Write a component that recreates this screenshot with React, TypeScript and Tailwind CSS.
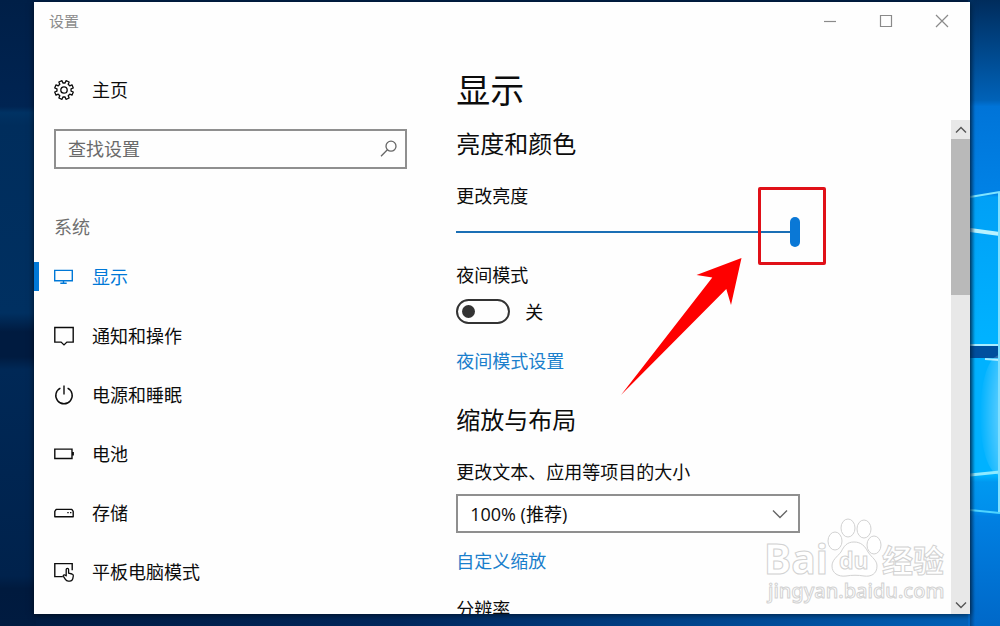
import { ReactNode, useState } from "react";

type IconProps = { className?: string };

function Icon({ children, className = "" }: { children: ReactNode; className?: string }) {
  return (
    <svg
      viewBox="0 0 20 20"
      className={`h-5 w-5 shrink-0 ${className}`}
      fill="none"
      stroke="currentColor"
      strokeWidth="1.4"
      aria-hidden="true"
    >
      {children}
    </svg>
  );
}

function gearPath() {
  const teeth = 8;
  const points: string[] = [];
  for (let i = 0; i < teeth; i++) {
    const base = (i * 2 * Math.PI) / teeth - Math.PI / 2 + Math.PI / 8;
    const corners: [number, number][] = [
      [-0.24, 7.1],
      [-0.18, 9.5],
      [0.18, 9.5],
      [0.24, 7.1],
    ];
    for (const [offset, r] of corners) {
      const x = 10 + r * Math.cos(base + offset);
      const y = 10 + r * Math.sin(base + offset);
      points.push(`${x.toFixed(2)} ${y.toFixed(2)}`);
    }
  }
  return `M${points.join("L")}Z`;
}

const GearIcon = ({ className }: IconProps) => (
  <Icon className={className}>
    <path d={gearPath()} strokeWidth="1.3" strokeLinejoin="round" />
    <circle cx="10" cy="10" r="3.2" strokeWidth="1.3" />
  </Icon>
);

const DisplayIcon = () => (
  <Icon>
    <path d="M.7 3.4h17.6v10.3H.7zM9.5 13.7v2.4M6.3 16.2h6.4" />
  </Icon>
);

const NotificationIcon = () => (
  <Icon>
    <path d="M.8 1.5h18.4v14.6h-6.3L10 18.9l-2.9-2.8H.8z" />
  </Icon>
);

const PowerIcon = () => (
  <Icon>
    <path d="M6.4 3.2a8.2 8.2 0 1 0 7.2 0M10 .6v9" />
  </Icon>
);

const BatteryIcon = () => (
  <Icon>
    <path d="M.8 5.1h17.2v9.4H.8zM19.2 8v3.6" />
  </Icon>
);

const StorageIcon = () => (
  <Icon>
    <path d="M2.2 6.4h15.6l1.4 2v5.4H.8V8.400z" strokeLinejoin="round" />
    <path d="M13.300 9.600h1.400M16 9.600h1.400" />
  </Icon>
);

const TabletIcon = () => (
  <Icon>
    <path d="M8.800 14.600H.8V1.600h17.400v6.600" />
    <path
      d="M12.200 13.800V7.600c0-1.700 2.400-1.700 2.400 0v3.600l3.400.8c1 .3 1.400 1 1.300 2l-.5 2.600c-.4 1.600-1.500 2.500-3 2.500h-1.500c-1.300 0-2.200-.6-2.900-1.700l-2-3.100c-.5-1.200.8-1.900 1.600-1.200z"
      strokeWidth="1.3"
      strokeLinejoin="round"
    />
  </Icon>
);

const items = [
  { label: "显示", icon: <DisplayIcon />, active: true },
  { label: "通知和操作", icon: <NotificationIcon /> },
  { label: "电源和睡眠", icon: <PowerIcon /> },
  { label: "电池", icon: <BatteryIcon /> },
  { label: "存储", icon: <StorageIcon /> },
  { label: "平板电脑模式", icon: <TabletIcon /> },
];

function Wallpaper() {
  return (
    <svg
      className="absolute inset-0 h-full w-full"
      viewBox="0 0 1000 626"
      preserveAspectRatio="none"
      aria-hidden="true"
    >
      <defs>
        <linearGradient id="base" x1="0" x2="1" y1="0" y2="0">
          <stop offset="0" stopColor="#001b40" />
          <stop offset="0.4" stopColor="#00275c" />
          <stop offset="0.75" stopColor="#004a96" />
          <stop offset="1" stopColor="#0064bd" />
        </linearGradient>
        <linearGradient id="left" x1="0" x2="0" y1="0" y2="1">
          <stop offset="0" stopColor="#001f47" />
          <stop offset="0.17" stopColor="#002452" />
          <stop offset="0.18" stopColor="#003263" />
          <stop offset="0.2" stopColor="#002d5c" />
          <stop offset="0.5" stopColor="#003061" />
          <stop offset="0.53" stopColor="#001b40" />
          <stop offset="0.57" stopColor="#001b40" />
          <stop offset="0.59" stopColor="#002856" />
          <stop offset="0.92" stopColor="#00224c" />
          <stop offset="0.94" stopColor="#001a3e" />
          <stop offset="1" stopColor="#001b40" />
        </linearGradient>
        <linearGradient id="right" x1="0" x2="0" y1="0" y2="1">
          <stop offset="0" stopColor="#002c5c" />
          <stop offset="0.16" stopColor="#0062b8" />
          <stop offset="0.17" stopColor="#0074d8" />
          <stop offset="0.31" stopColor="#0082e6" />
          <stop offset="0.315" stopColor="#00a0f6" />
          <stop offset="0.54" stopColor="#00b2ff" />
          <stop offset="0.76" stopColor="#00b2ff" />
          <stop offset="0.77" stopColor="#0098f0" />
          <stop offset="0.815" stopColor="#0090ec" />
          <stop offset="0.825" stopColor="#0080e2" />
          <stop offset="1" stopColor="#0068c8" />
        </linearGradient>
        <linearGradient id="shade" x1="0" x2="1" y1="0" y2="0">
          <stop offset="0" stopColor="#003468" stopOpacity="0.7" />
          <stop offset="1" stopColor="#003468" stopOpacity="0" />
        </linearGradient>
        <radialGradient id="glow" cx="1" cy="0.5" r="1">
          <stop offset="0" stopColor="#fff" />
          <stop offset="0.5" stopColor="#fff" stopOpacity="0.35" />
          <stop offset="1" stopColor="#fff" stopOpacity="0" />
        </radialGradient>
      </defs>
      <rect width="1000" height="626" fill="url(#base)" />
      <rect width="1000" height="2" fill="#00204a" />
      <rect width="36" height="626" fill="url(#left)" />
      <rect x="968" width="32" height="626" fill="url(#right)" />
      <path d="M970 197l30-5" stroke="#7fe4ff" strokeWidth="2" />
      <path d="M970 230l30 4" stroke="#b8f2ff" strokeWidth="4" />
      <path d="M970 346h30v12h-30z" fill="#004f9e" />
      <path d="M970 345h30M985 359l15 1" stroke="#a8ecff" strokeWidth="2" />
      <ellipse cx="1000" cy="415" rx="20" ry="60" fill="url(#glow)" />
      <path d="M970 475l30-3" stroke="#8feaff" strokeWidth="3" />
      <path d="M970 510l30 3" stroke="#4fd4ff" strokeWidth="2" />
      <path d="M999 192v320" stroke="#7fe0ff" strokeWidth="2" />
      <rect x="970" width="5" height="626" fill="url(#shade)" />
    </svg>
  );
}

function Watermark() {
  return (
    <svg
      className="pointer-events-none absolute right-5 bottom-1 h-[96px] w-[190px]"
      viewBox="0 0 190 96"
      fill="#fff"
      stroke="#d2d2d2"
      strokeWidth="1"
      aria-hidden="true"
    >
      <ellipse cx="75" cy="27" rx="7" ry="9" />
      <ellipse cx="88" cy="14" rx="7" ry="9" />
      <ellipse cx="104" cy="15" rx="7" ry="9" />
      <ellipse cx="114" cy="31" rx="7" ry="9" />
      <path d="M94 28c7 0 11 4 14 10 4 6 9 8 9 14 0 8-6 11-13 10-6-1-12-1-18 0-8 1-14-3-14-10 0-6 5-9 9-14 3-6 6-10 13-10z" />
      <text x="4" y="60" fontSize="41" fontWeight="700" fontFamily="Noto Sans, sans-serif">
        Bai
      </text>
      <text x="79" y="55" fontSize="23" fontWeight="700" fontFamily="Noto Sans, sans-serif">
        du
      </text>
      <text x="122" y="58" fontSize="31" fontWeight="700" fontFamily="Noto Sans CJK SC, sans-serif">
        经验
      </text>
      <text x="8" y="84" fontSize="20" fontWeight="500" fontFamily="Noto Sans, sans-serif">
        jingyan.baidu.com
      </text>
    </svg>
  );
}

function ScrollBar() {
  return (
    <div className="mt-20 flex w-[19px] shrink-0 flex-col bg-[#e8e8e8] text-[#555]">
      <button type="button" aria-label="向上滚动" className="flex h-[19px] items-center justify-center">
        <svg viewBox="0 0 12 8" className="h-2 w-3" fill="none" stroke="currentColor" strokeWidth="1.4" aria-hidden="true">
          <path d="M1 6.500l5-5 5 5" />
        </svg>
      </button>
      <div className="h-[156px] bg-[#b9b9b9]" />
      <button type="button" aria-label="向下滚动" className="mt-auto flex h-[19px] items-center justify-center">
        <svg viewBox="0 0 12 8" className="h-2 w-3" fill="none" stroke="currentColor" strokeWidth="1.4" aria-hidden="true">
          <path d="M1 1.500l5 5 5-5" />
        </svg>
      </button>
    </div>
  );
}

function TitleBar() {
  return (
    <header className="flex h-[38px] shrink-0 items-center justify-between pl-[15px]">
      <h1 className="text-[15px] leading-5 text-[#8c8c8c]">设置</h1>
      <div className="flex text-[#8a8a8a]">
        <button type="button" aria-label="最小化" className="flex h-[38px] w-14 items-center justify-center">
          <svg viewBox="0 0 14 14" className="h-[14px] w-[14px]" fill="none" stroke="currentColor" strokeWidth="1.2" aria-hidden="true">
            <path d="M1 7.500h12" />
          </svg>
        </button>
        <button type="button" aria-label="最大化" className="flex h-[38px] w-14 items-center justify-center">
          <svg viewBox="0 0 14 14" className="h-[14px] w-[14px]" fill="none" stroke="currentColor" strokeWidth="1.2" aria-hidden="true">
            <path d="M1.500 1.500h11v11h-11z" />
          </svg>
        </button>
        <button type="button" aria-label="关闭" className="flex h-[38px] w-14 items-center justify-center">
          <svg viewBox="0 0 14 14" className="h-[14px] w-[14px]" fill="none" stroke="currentColor" strokeWidth="1.2" aria-hidden="true">
            <path d="M1 1l12 12M13 1L1 13" />
          </svg>
        </button>
      </div>
    </header>
  );
}

function Sidebar() {
  return (
    <aside className="w-[45%] shrink-0 pt-5">
      <a href="#home" className="flex h-[60px] items-center gap-[18px] pl-5">
        <GearIcon />
        <span>主页</span>
      </a>
      <div className="mt-[9px] mr-12 ml-5 flex h-10 items-center border-2 border-[#8f8f8f] pr-2 pl-3">
        <input
          type="search"
          aria-label="查找设置"
          placeholder="查找设置"
          className="min-w-0 flex-1 bg-transparent outline-none placeholder:text-[#6a6a6a]"
        />
        <svg viewBox="0 0 18 18" className="h-[18px] w-[18px]" fill="none" stroke="#666" strokeWidth="1.3" aria-hidden="true">
          <circle cx="12" cy="6.200" r="5" />
          <path d="M8.400 9.800L2 16.200" />
        </svg>
      </div>
      <h2 className="mt-11 pl-5 text-[#6f6f6f]">系统</h2>
      <nav className="mt-1.5">
        {items.map((item) => (
          <a
            key={item.label}
            href={`#${item.label}`}
            aria-current={item.active ? "page" : undefined}
            className={`relative flex h-[59px] items-center gap-[18px] pl-5 ${item.active ? "text-[#0078d7]" : ""}`}
          >
            {item.active && <span className="absolute left-0 h-[29px] w-[5px] bg-[#0078d7]" />}
            {item.icon}
            <span>{item.label}</span>
          </a>
        ))}
      </nav>
    </aside>
  );
}

function DisplaySettings() {
  const [brightness, setBrightness] = useState(100);
  const [night, setNight] = useState(false);

  return (
    <main className="min-w-0 flex-1 overflow-hidden pt-[26px] pr-5 pl-px">
      <div className="w-full max-w-[344px]">
        <h2 className="text-[34px] leading-[48px]">显示</h2>
        <h3 className="mt-3 text-2xl leading-9">亮度和颜色</h3>

        <label htmlFor="brightness" className="mt-5 block">
          更改亮度
        </label>
        <div className="relative mt-1.5 flex h-[31px] items-center">
          <input
            id="brightness"
            type="range"
            min="0"
            max="100"
            value={brightness}
            onChange={(e) => setBrightness(Number(e.target.value))}
            className="h-[30px] w-full appearance-none bg-transparent [&::-webkit-slider-runnable-track]:h-[2px] [&::-webkit-slider-runnable-track]:bg-[#1a6fb5] [&::-webkit-slider-thumb]:-mt-[14px] [&::-webkit-slider-thumb]:h-[30px] [&::-webkit-slider-thumb]:w-[10px] [&::-webkit-slider-thumb]:appearance-none [&::-webkit-slider-thumb]:rounded-full [&::-webkit-slider-thumb]:bg-[#0a78d6]"
          />
          <span className="pointer-events-none absolute -top-[29px] -right-[26px] h-[78px] w-[68px] rounded-xs border-3 border-[#e01018]" />
          <svg
            className="pointer-events-none absolute top-[42px] right-[58px] h-[138px] w-[122px]"
            viewBox="0 0 122 138"
            fill="#fe0000"
            aria-hidden="true"
          >
            <path d="M121.500 0L111 47l-4.700-16L1 137 92.300 19.500 76.500 17z" />
          </svg>
        </div>

        <div className="mt-[14px]">夜间模式</div>
        <label className="mt-[9px] flex h-[27px] items-center gap-[15px]">
          <input
            type="checkbox"
            role="switch"
            aria-label="夜间模式"
            checked={night}
            onChange={(e) => setNight(e.target.checked)}
            className="flex h-[25px] w-[54px] appearance-none items-center rounded-full border-[2px] border-[#333] px-[4px] before:h-[13px] before:w-[13px] before:rounded-full before:bg-[#333] checked:justify-end"
          />
          <span>{night ? "开" : "关"}</span>
        </label>
        <a href="#night" className="mt-[22px] block text-[#1a7fcc]">
          夜间模式设置
        </a>

        <h3 className="mt-[27px] text-2xl leading-9">缩放与布局</h3>
        <label htmlFor="scale" className="mt-5 block">
          更改文本、应用等项目的大小
        </label>
        <div className="relative mt-2">
          <select
            id="scale"
            className="block h-[39px] w-full appearance-none border-2 border-[#8f8f8f] bg-white pr-10 pl-3"
          >
            <option>100% (推荐)</option>
            <option>125%</option>
            <option>150%</option>
          </select>
          <svg viewBox="0 0 16 10" className="pointer-events-none absolute top-[15px] right-3 h-[10px] w-4" fill="none" stroke="#666" strokeWidth="1.4" aria-hidden="true">
            <path d="M1 1.500l7 7 7-7" />
          </svg>
        </div>
        <a href="#custom" className="mt-[14px] block text-[#1a7fcc]">
          自定义缩放
        </a>
        <div className="mt-5">分辨率</div>
      </div>
    </main>
  );
}

export default function App() {
  return (
    <div className="relative flex h-screen overflow-hidden pt-[2px] pr-[30px] pb-3 pl-[34px]">
      <Wallpaper />
      <div className="relative flex min-w-0 flex-1 flex-col bg-[#fefefe] font-['Open_Sans','Noto_Sans_CJK_SC',sans-serif] text-[18px] leading-7 text-[#0c0c0c] shadow-[0_1px_6px_rgba(0,0,0,0.6)]">
        <TitleBar />
        <div className="flex min-h-0 flex-1">
          <Sidebar />
          <DisplaySettings />
          <ScrollBar />
        </div>
        <Watermark />
      </div>
    </div>
  );
}
